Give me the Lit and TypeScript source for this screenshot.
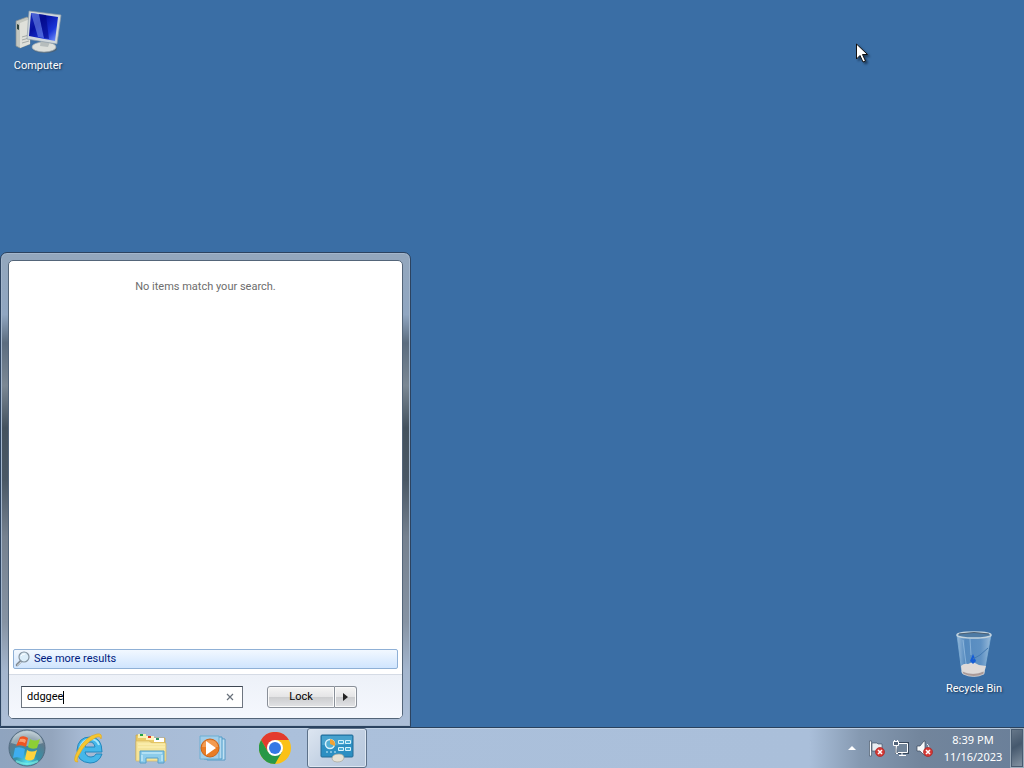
import { LitElement, html, css, svg } from 'lit';
import { customElement, property, state } from 'lit/decorators.js';
import { classMap } from 'lit/directives/class-map.js';

const computerIcon = svg`
  <svg width="48" height="48" viewBox="0 0 48 48" aria-hidden="true">
    <defs>
      <linearGradient id="screen" x1="0" y1="0" x2="1" y2="1">
        <stop offset="0" stop-color="#1c2ec0" /><stop offset=".35" stop-color="#0510a0" />
        <stop offset=".7" stop-color="#1a35d8" /><stop offset="1" stop-color="#7fa0ff" />
      </linearGradient>
    </defs>
    <path d="M2 14l11-4 3 2v25l-10 4-4-2z" fill="#c4c7c0" stroke="#8b918f" stroke-width=".7" />
    <path d="M6 16l10-4v25L6 41z" fill="#dfe0da" />
    <path d="M8 30l7-2M8 33l7-2M8 36l7-2" stroke="#a5aaa8" />
    <path d="M3 17l2 1v5l-2-1z" fill="#30443e" />
    <ellipse cx="31" cy="42" rx="12" ry="4" fill="#49637c" />
    <ellipse cx="30" cy="40" rx="12" ry="5" fill="#dcdfdb" stroke="#9ba5aa" stroke-width=".7" />
    <path d="M27 33l9 2-2 5-8-1z" fill="#b6bdbd" />
    <path d="M15 4l32 4-4 29-30-5z" fill="#cfd7dc" stroke="#8d9ba8" stroke-width=".7" />
    <path d="M17 6l27 4-3 24-26-5z" fill="url(#screen)" />
    <path d="M17 6l8 1 5 24-6-1z" fill="#6c88e8" opacity=".6" />
    <path d="M25 7l7 1 3 24-5-1z" fill="#030886" opacity=".6" />
  </svg>`;

const binIcon = svg`
  <svg width="48" height="48" viewBox="0 0 48 48" aria-hidden="true">
    <defs>
      <linearGradient id="glass">
        <stop offset="0" stop-color="#b9d5ec" stop-opacity=".75" /><stop offset=".25" stop-color="#669cd0" stop-opacity=".6" />
        <stop offset=".7" stop-color="#77a9d8" stop-opacity=".6" /><stop offset="1" stop-color="#c4ddf0" stop-opacity=".7" />
      </linearGradient>
    </defs>
    <path d="M7 5l5 38q12 5 22 0l7-38q-17 5-34 0z" fill="url(#glass)" stroke="#7faed6" stroke-width=".8" />
    <path d="M11 36q3-3 7-2l5-2 6 3 7 1-2 7q-10 5-22 0z" fill="#dfdad8" />
    <path d="M12 41q11 5 22 0v3q-10 5-21 0z" fill="#aa9a98" stroke="#ddd" stroke-width=".7" />
    <path d="M20 31l3-7 3 7-3 3z" fill="#165dd6" />
    <path d="M38 18l-8 7-7 4" fill="none" stroke="#4279b1" />
    <path d="M13 10l3 24M20 9l1 16" stroke="#a6c9e8" opacity=".6" />
    <ellipse cx="24" cy="5" rx="17" ry="3" fill="#4e7ba5" stroke="#c3d3de" stroke-width="1.5" />
    <path d="M9 4q15-3 30 0" fill="none" stroke="#4a5f73" />
  </svg>`;

const orbIcon = svg`
  <svg width="38" height="38" viewBox="0 0 38 38" aria-hidden="true">
    <defs>
      <radialGradient id="orb" cx=".5" cy=".9" r=".9">
        <stop offset="0" stop-color="#54e0ef" /><stop offset=".35" stop-color="#3391a8" />
        <stop offset=".75" stop-color="#60798c" /><stop offset="1" stop-color="#c0ced8" />
      </radialGradient>
    </defs>
    <circle cx="19" cy="19" r="18" fill="url(#orb)" stroke="#526b80" />
    <path d="M3 14Q6 3 19 2q13 1 16 12-15 6-32 0z" fill="#dce7e7" opacity=".45" />
    <path d="M12 8q4-2 8 1l-2 9q-5-3-10-1z" fill="#ee5422" />
    <path d="M22 10q5 3 10 0l-3 9q-5 2-9-1z" fill="#8dcf35" />
    <path d="M7 19q5-2 10 1l-2 10q-5-3-10-1z" fill="#3eaef0" />
    <path d="M19 21q5 3 10 0l-3 9q-5 3-9 0z" fill="#ffd33c" />
    <path d="M12 10q4-1 6 1l-1 3q-4-2-6-1z" fill="#ff9d6c" />
    <path d="M8 32q11 6 22 0" stroke="#83f5e5" fill="none" stroke-width="2" opacity=".6" />
  </svg>`;

const ieIcon = svg`
  <svg width="32" height="32" viewBox="0 0 32 32" aria-hidden="true">
    <path d="M29 20H12q1 5 6 5 4 0 5-3h6q-3 9-12 9Q4 30 4 18 5 5 17 5q12 0 12 15zM12 15h10q-1-5-5-5t-5 5z" fill="#45b7e9" stroke="#2387bd" />
    <path d="M7 16q2-8 10-9 7 0 9 6" fill="none" stroke="#a5e6fb" stroke-width="2" />
    <path d="M5 30Q-2 31 5 18 13 4 24 2q6-1 4 5-1-4-6-1Q12 11 6 23q-3 5-1 7z" fill="#f6c72f" stroke="#dba426" stroke-width=".6" />
  </svg>`;

const explorerIcon = svg`
  <svg width="34" height="32" viewBox="0 0 34 32" aria-hidden="true">
    <path d="M2 3h8l2 3h19v22H2z" fill="#eacb68" stroke="#c5a34b" stroke-width=".7" />
    <path d="M4 2h8v4H4z" fill="#f7f1b4" /><path d="M6 2h3v2H6z" fill="#27a243" />
    <path d="M12 4h8v4h-8z" fill="#fff2bd" /><path d="M14 4h3v2h-3z" fill="#dc3824" />
    <path d="M20 6h10v4H20z" fill="#fff" /><path d="M22 6h3v2h-3z" fill="#2b9a68" />
    <path d="M2 9h13l3 2h14v18H2z" fill="#f4e49a" stroke="#d8b95e" stroke-width=".7" />
    <path d="M4 12h27M4 15h27" stroke="#fff3b7" />
    <path d="M6 31V19h24v12h-6v-5H12v5z" fill="#8ccceb" stroke="#569fc9" />
    <path d="M8 21h20M8 23v6M28 23v6" stroke="#d7f4fd" />
  </svg>`;

const playerIcon = svg`
  <svg width="32" height="28" viewBox="0 0 32 28" aria-hidden="true">
    <path d="M10 4l18 1v21H10z" fill="#c1e1f3" stroke="#5499c5" />
    <path d="M7 3h18v22H7z" fill="#b4daf0" stroke="#4d9bc9" />
    <path d="M3 2h19v23H3z" fill="#a3cee9" stroke="#6caed3" />
    <circle cx="13" cy="14" r="9" fill="#e97c25" stroke="#cd6519" />
    <path d="M5 13Q6 6 13 6t8 7z" fill="#f8b071" opacity=".6" />
    <path d="M9 7l10 7-10 7z" fill="#fff" />
  </svg>`;

const chromeIcon = svg`
  <svg width="32" height="32" viewBox="0 0 32 32" aria-hidden="true">
    <circle cx="16" cy="16" r="16" fill="#fbc116" />
    <path d="M2.1 8A16 16 0 0 1 29.9 8H16L9.1 20z" fill="#e33b2e" />
    <path d="M2.1 8A16 16 0 0 0 16 32l6.9-12H9.1z" fill="#279847" />
    <circle cx="16" cy="16" r="8" fill="#fff" /><circle cx="16" cy="16" r="6" fill="#3478e5" />
  </svg>`;

const panelIcon = svg`
  <svg width="34" height="30" viewBox="0 0 34 30" aria-hidden="true">
    <rect x="1" y="2" width="32" height="22" rx="1" fill="#2c8fc2" stroke="#226b96" />
    <path d="M2 3h30v7Q18 14 2 12z" fill="#62b5da" opacity=".5" />
    <circle cx="10" cy="11" r="4.5" fill="#54aed3" stroke="#d8f1fb" stroke-width="1.5" />
    <path d="M10 11V6q6 1 5 7z" fill="#f1a234" />
    <path d="M18.500 7.500h5v3h-5zM25.500 7.500h5v3h-5zM18.500 14.500h5v3h-5zM25.500 14.500h5v3h-5z" fill="#4badd7" stroke="#d5f2fb" />
    <path d="M6 19h2M10 19h2M14 19h2" stroke="#cbeefa" />
    <path d="M12 26q0-5 7-5 5 0 5 4-1 4-7 4-4 0-5-3z" fill="#e7e3d6" stroke="#a7a69a" stroke-width=".7" />
  </svg>`;

const lensIcon = svg`
  <svg width="16" height="16" viewBox="0 0 16 16" aria-hidden="true">
    <path d="M6 10l-4 4" stroke="#7f8992" stroke-width="2.6" stroke-linecap="round" />
    <path d="M6.5 10.5l-4.5 4" stroke="#dfe4e8" />
    <circle cx="9" cy="6" r="5" fill="#dceefa" stroke="#8493a0" stroke-width="1.2" />
    <path d="M6 5q1-2 4-2" stroke="#fff" fill="none" />
  </svg>`;

const badge = svg`
  <circle cx="12" cy="12" r="4.5" fill="#d63a36" stroke="#a92424" stroke-width=".7" />
  <path d="M10 10l4 4M14 10l-4 4" stroke="#fff" stroke-width="1.5" />`;

const flagIcon = svg`
  <svg width="17" height="17" viewBox="0 0 17 17" aria-hidden="true">
    <path d="M1.5 1h2v15h-2z" fill="#fff" stroke="#36465a" stroke-width=".6" />
    <path d="M4 3h5l1 1h4v8H9l-1-1H4z" fill="#e8edf2" stroke="#36465a" stroke-width=".6" />
    ${badge}
  </svg>`;

const networkIcon = svg`
  <svg width="17" height="17" viewBox="0 0 17 17" aria-hidden="true">
    <path d="M4.5 3.5h11v9h-11z" fill="#718499" stroke="#36465a" stroke-width="3" />
    <path d="M4.5 3.5h11v9h-11z" fill="#718499" stroke="#fff" />
    <path d="M10 13v2M7 15.5h7" stroke="#fff" />
    <path d="M1.5 1.5h5v4h-5zM4 6v7.5h2" fill="#53647a" stroke="#fff" />
    <path d="M2.5 0v2M5.5 0v2" stroke="#fff" />
  </svg>`;

const soundIcon = svg`
  <svg width="17" height="17" viewBox="0 0 17 17" aria-hidden="true">
    <path d="M1 6h3l4-5h1v14H8l-4-4H1z" fill="#f8fafb" stroke="#36465a" stroke-width=".7" />
    <path d="M11 4q2 1 2 4" fill="none" stroke="#e5edf4" />
    ${badge}
  </svg>`;

@customElement('desktop-icon')
export class DesktopIcon extends LitElement {
  @property() name = '';

  static styles = css`
    :host {
      display: block;
      width: 76px;
    }

    .icon {
      display: flex;
      flex-direction: column;
      align-items: center;
      gap: 3px;
      width: 100%;
      padding: 0;
      border: 0;
      background: none;
      color: #fff;
      font: 11px/16px Roboto, sans-serif;
      text-shadow: 1px 1px 2px #17324f;
    }
  `;

  render() {
    return html`
      <button class="icon">
        ${this.name === 'Computer' ? computerIcon : binIcon}
        <span>${this.name}</span>
      </button>
    `;
  }
}

@customElement('start-menu')
export class StartMenu extends LitElement {
  @state() query = 'ddggee';

  static styles = css`
    :host {
      display: flex;
      box-sizing: border-box;
      width: 411px;
      max-width: 100%;
      padding: 7px;
      border: 1px solid #2c4360;
      border-radius: 7px 7px 0 0;
      background: linear-gradient(#93a7bd, #90a6c1 13%, #5c6d7f 19%, #7b8894 28%, #44525e 37%, #4a5865 48%, #75818f 60%, #8693a3 78%, #a3b5cd 88%, #adbfd8);
      box-shadow: inset 0 0 0 1px #a3b6cc;
      font: 11px/16px Roboto, sans-serif;
    }

    .panel {
      display: flex;
      flex: 1;
      flex-direction: column;
      border: 1px solid #536579;
      border-radius: 5px;
      overflow: hidden;
      background: #fff;
    }

    .results {
      display: flex;
      flex: 1;
      flex-direction: column;
      justify-content: space-between;
      padding: 18px 4px 5px;
    }

    .message {
      margin: 0;
      color: #6d6d6d;
      text-align: center;
    }

    .more {
      display: flex;
      align-items: center;
      gap: 3px;
      padding: 1px 1px;
      border: 1px solid #8fb0d6;
      border-radius: 2px;
      background: linear-gradient(#f2f8ff, #d0e5fe);
      color: #001b80;
      text-decoration: none;
    }

    .footer {
      display: flex;
      align-items: center;
      gap: 24px;
      padding: 11px 12px 10px;
      border-top: 1px solid #d5dbe5;
      background: linear-gradient(#edf1f8, #f5f8fe);
    }

    .search {
      display: flex;
      align-items: center;
      box-sizing: border-box;
      width: 222px;
      height: 22px;
      padding-left: 5px;
      border: 1px solid #6d7580;
      border-top-color: #3d4652;
      background: #fff;
    }

    .query {
      field-sizing: content;
      min-width: 0;
      padding: 0;
      border: 0;
      outline: 0;
      background: none;
      color: #000;
      caret-color: transparent;
      font: inherit;
    }

    .caret {
      width: 1px;
      height: 13px;
      background: #000;
    }

    .clear {
      display: flex;
      margin-left: auto;
      padding: 0 7px;
      border: 0;
      background: none;
    }

    .power {
      display: flex;
      height: 22px;
    }

    .lock,
    .arrow {
      display: flex;
      align-items: center;
      justify-content: center;
      box-sizing: border-box;
      width: 68px;
      padding: 0;
      border: 1px solid #8a9099;
      border-radius: 3px 0 0 3px;
      background: linear-gradient(#f5f5f5, #e5e5e6 48%, #cbccce 50%, #e2e3e6);
      box-shadow: inset 0 0 0 1px #fafafa;
      color: #000;
      font: inherit;
    }

    .arrow {
      width: 22px;
      border-left: 0;
      border-radius: 0 3px 3px 0;
    }
  `;

  onInput(e: Event) {
    this.query = (e.target as HTMLInputElement).value;
  }

  render() {
    return html`
      <div class="panel">
        <div class="results">
          <p class="message">No items match your search.</p>
          <a class="more" href="#results">${lensIcon}<span>See more results</span></a>
        </div>
        <div class="footer">
          <label class="search">
            <input class="query" aria-label="Search programs and files" .value=${this.query} @input=${this.onInput} />
            <span class="caret"></span>
            <button class="clear" aria-label="Clear" @click=${() => (this.query = '')}>
              <svg width="9" height="8" viewBox="0 0 9 8"><path d="M1 1l6 6M7 1L1 7" stroke="#69717b" stroke-width="1.2" /></svg>
            </button>
          </label>
          <div class="power">
            <button class="lock">Lock</button>
            <button class="arrow" aria-label="Shut down options">
              <svg width="5" height="8" viewBox="0 0 5 8"><path d="M0 0l5 4-5 4z" fill="#222" /></svg>
            </button>
          </div>
        </div>
      </div>
    `;
  }
}

@customElement('task-bar')
export class TaskBar extends LitElement {
  apps = [
    { name: 'Internet Explorer', icon: ieIcon },
    { name: 'Windows Explorer', icon: explorerIcon },
    { name: 'Windows Media Player', icon: playerIcon },
    { name: 'Google Chrome', icon: chromeIcon },
    { name: 'Control Panel', icon: panelIcon, active: true },
  ];

  tray = [
    { name: 'Action Center', icon: flagIcon },
    { name: 'Network', icon: networkIcon },
    { name: 'Speakers', icon: soundIcon },
  ];

  static styles = css`
    :host {
      display: flex;
      align-items: stretch;
      height: 40px;
      border-top: 1px solid #2a425e;
      background: linear-gradient(90deg, #8fa4bf, #93a5bd 5%, #a6b9d3 8%, #abc0db 25%, #aabfda 79%, #8599b1 84%, #72859c 90%, #6a7f99);
      box-shadow: inset 0 1px 0 #bfd0e4;
      font: 11px/17px 'Noto Sans', sans-serif;
    }

    button {
      display: flex;
      align-items: center;
      justify-content: center;
      padding: 0;
      border: 0;
      background: none;
      font: inherit;
    }

    .start {
      width: 54px;
    }

    .apps {
      display: flex;
      flex: 1;
      gap: 2px;
      margin-left: 5px;
    }

    .app {
      box-sizing: border-box;
      width: 60px;
      border: 1px solid transparent;
      border-radius: 3px;
    }

    .app.active {
      border-color: #5d7189;
      background: linear-gradient(135deg, #dde6f1, #c3d1e3 50%, #b7c8dd);
      box-shadow: inset 0 0 0 1px #dde7f2;
    }

    .tray {
      display: flex;
      align-items: center;
    }

    .item {
      width: 24px;
      height: 24px;
    }

    .clock {
      flex-direction: column;
      width: 74px;
      color: #fff;
    }

    .show {
      align-self: stretch;
      box-sizing: border-box;
      width: 14px;
      border: 1px solid #9dadbc;
      background: linear-gradient(150deg, #68798b, #45586d 45%, #8796a5);
      box-shadow: inset 0 0 0 1px #485b70;
    }
  `;

  render() {
    return html`
      <button class="start" aria-label="Start">${orbIcon}</button>
      <div class="apps">
        ${this.apps.map(
          (app) => html`
            <button class=${classMap({ app: true, active: !!app.active })} aria-label=${app.name}>${app.icon}</button>
          `
        )}
      </div>
      <div class="tray">
        <button class="item" aria-label="Show hidden icons">
          <svg width="8" height="5" viewBox="0 0 8 5"><path d="M0 4l4-4 4 4z" fill="#fff" /></svg>
        </button>
        ${this.tray.map((item) => html`<button class="item" aria-label=${item.name}>${item.icon}</button>`)}
        <button class="clock"><span>8:39 PM</span><span>11/16/2023</span></button>
        <button class="show" aria-label="Show desktop"></button>
      </div>
    `;
  }
}

@customElement('app-root')
export class AppRoot extends LitElement {
  static styles = css`
    :host {
      display: flex;
      flex-direction: column;
      position: relative;
      height: 100vh;
      overflow: hidden;
      background: #3a6ea5;
    }

    .desktop {
      display: flex;
      flex: 1;
      justify-content: space-between;
      min-height: 0;
    }

    .left {
      display: flex;
      flex-direction: column;
      justify-content: space-between;
      padding-top: 7px;
    }

    .menu {
      height: calc(62vh - 1px);
    }

    .bin {
      align-self: flex-end;
      padding: 0 12px 30px 0;
    }

    .cursor {
      position: absolute;
      top: 43px;
      left: 856px;
      filter: drop-shadow(2px 2px 1px #1b3a5c);
    }
  `;

  render() {
    return html`
      <div class="desktop">
        <div class="left">
          <desktop-icon name="Computer"></desktop-icon>
          <start-menu class="menu"></start-menu>
        </div>
        <desktop-icon class="bin" name="Recycle Bin"></desktop-icon>
      </div>
      <task-bar></task-bar>
      <svg class="cursor" width="13" height="20" viewBox="0 0 13 20" aria-hidden="true">
        <path d="M.5 1v15l3.5-3.5 3 6.5 2.5-1-3-6.5h5z" fill="#fff" stroke="#111" />
      </svg>
    `;
  }
}
